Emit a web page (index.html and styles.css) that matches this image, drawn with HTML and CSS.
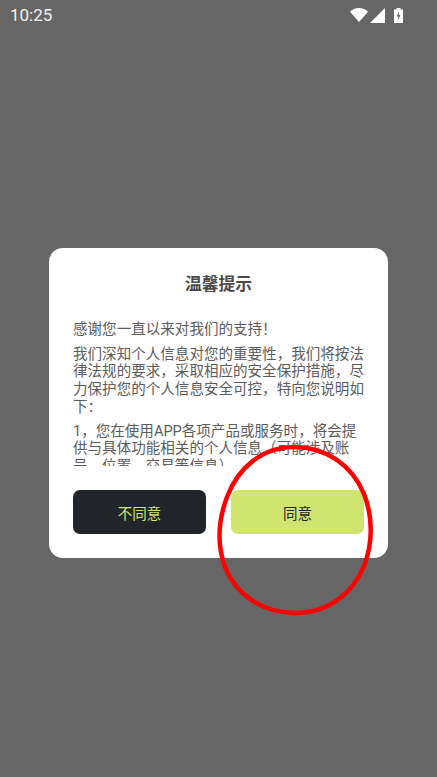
FILE: index.html
```html
<!DOCTYPE html>
<html lang="zh-CN">
<head>
<meta charset="utf-8">
<title>温馨提示</title>
<link rel="stylesheet" href="styles.css">
</head>
<body>
<div class="screen">
  <header class="status">
    <span class="time">10:25</span>
    <div class="status-icons">
      <svg class="i-wifi" viewBox="0 0 18 14"><path d="M0 3.800C2.300 1.400 5.400 0 9 0s6.700 1.400 9 3.800L9 14z" fill="#fff"/></svg>
      <svg class="i-signal" viewBox="0 0 15 15"><path d="M0 15 15 0v15z" fill="#fff"/></svg>
      <svg class="i-battery" viewBox="0 0 9 15"><path fill-rule="evenodd" d="M2.500 0h4v1.500H9V15H0V1.500h2.500zM5 3.500 2.600 8.500h1.700L3.800 12.500 6.500 7H4.800z" fill="#fff"/></svg>
    </div>
  </header>
  <main class="center">
    <section class="dialog">
      <h1 class="title">温馨提示</h1>
      <div class="body">
        <p class="first">感谢您一直以来对我们的支持！</p>
        <p class="second">我们深知个人信息对您的重要性，我们将按法律法规的要求，采取相应的安全保护措施，尽力保护您的个人信息安全可控，特向您说明如下：</p>
        <p>1，您在使用APP各项产品或服务时，将会提供与具体功能相关的个人信息（可能涉及账号、位置、交易等信息）</p>
      </div>
      <div class="actions">
        <button class="btn dark">不同意</button>
        <button class="btn light">同意</button>
      </div>
    </section>
  </main>
  <svg class="circle" viewBox="0 0 437 777"><path d="M294 447C262 447 238 468 227 497C218 521 217 545 225 567C236 595 263 613 295 613C327 613 352 595 364 566C373 543 373 517 364 494C352 465 326 447 294 447Z" fill="none" stroke="#f00" stroke-width="4.500"/></svg>
</div>
</body>
</html>
```
FILE: styles.css
```css
* { box-sizing: border-box; margin: 0; padding: 0; }
html, body { width: 437px; height: 777px; overflow: hidden; }
body { font-family: Roboto, "Noto Sans CJK SC", sans-serif; background: #666; }
.screen { position: relative; width: 437px; height: 777px; background: #666; display: flex; flex-direction: column; }
.status { height: 30px; display: flex; align-items: center; justify-content: space-between; padding: 0 34px 0 10px; color: #fff; flex: none; }
.time { font-size: 17px; line-height: 30px; color: #f2f2f2; }
.status-icons { display: flex; align-items: center; gap: 2px; }
.status-icons svg { display: block; }
.i-wifi { width: 18px; height: 14px; }
.i-signal { width: 15px; height: 15px; }
.i-battery { width: 9px; height: 15px; margin-left: 7px; }
.center { flex: none; display: flex; justify-content: center; padding: 218px 0 0 0; }
.dialog { width: 339px; height: 310px; background: #fff; border-radius: 14px; padding: 0 24px; display: flex; flex-direction: column; }
.title { font-size: 16.800px; line-height: 22px; font-weight: 700; color: #4a4a4a; text-align: center; margin-top: 25px; }
.body { height: 146px; margin-top: 25px; overflow: hidden; font-size: 14.550px; line-height: 17.700px; color: #5c5c5c; }
.body p { margin-bottom: 7px; }
.body p.first { margin-top: 1px; margin-bottom: 7px; }
.body p.second { margin-bottom: 6px; }
.actions { display: flex; justify-content: space-between; margin-top: 24px; }
.btn { width: 133px; height: 44px; border: none; border-radius: 7px; font-family: inherit; font-size: 14.500px; }
.dark { background: #212529; color: #cfe570; }
.light { background: #cfe570; color: #212529; }
.circle { position: absolute; left: 0; top: 0; width: 437px; height: 777px; pointer-events: none; }
```
